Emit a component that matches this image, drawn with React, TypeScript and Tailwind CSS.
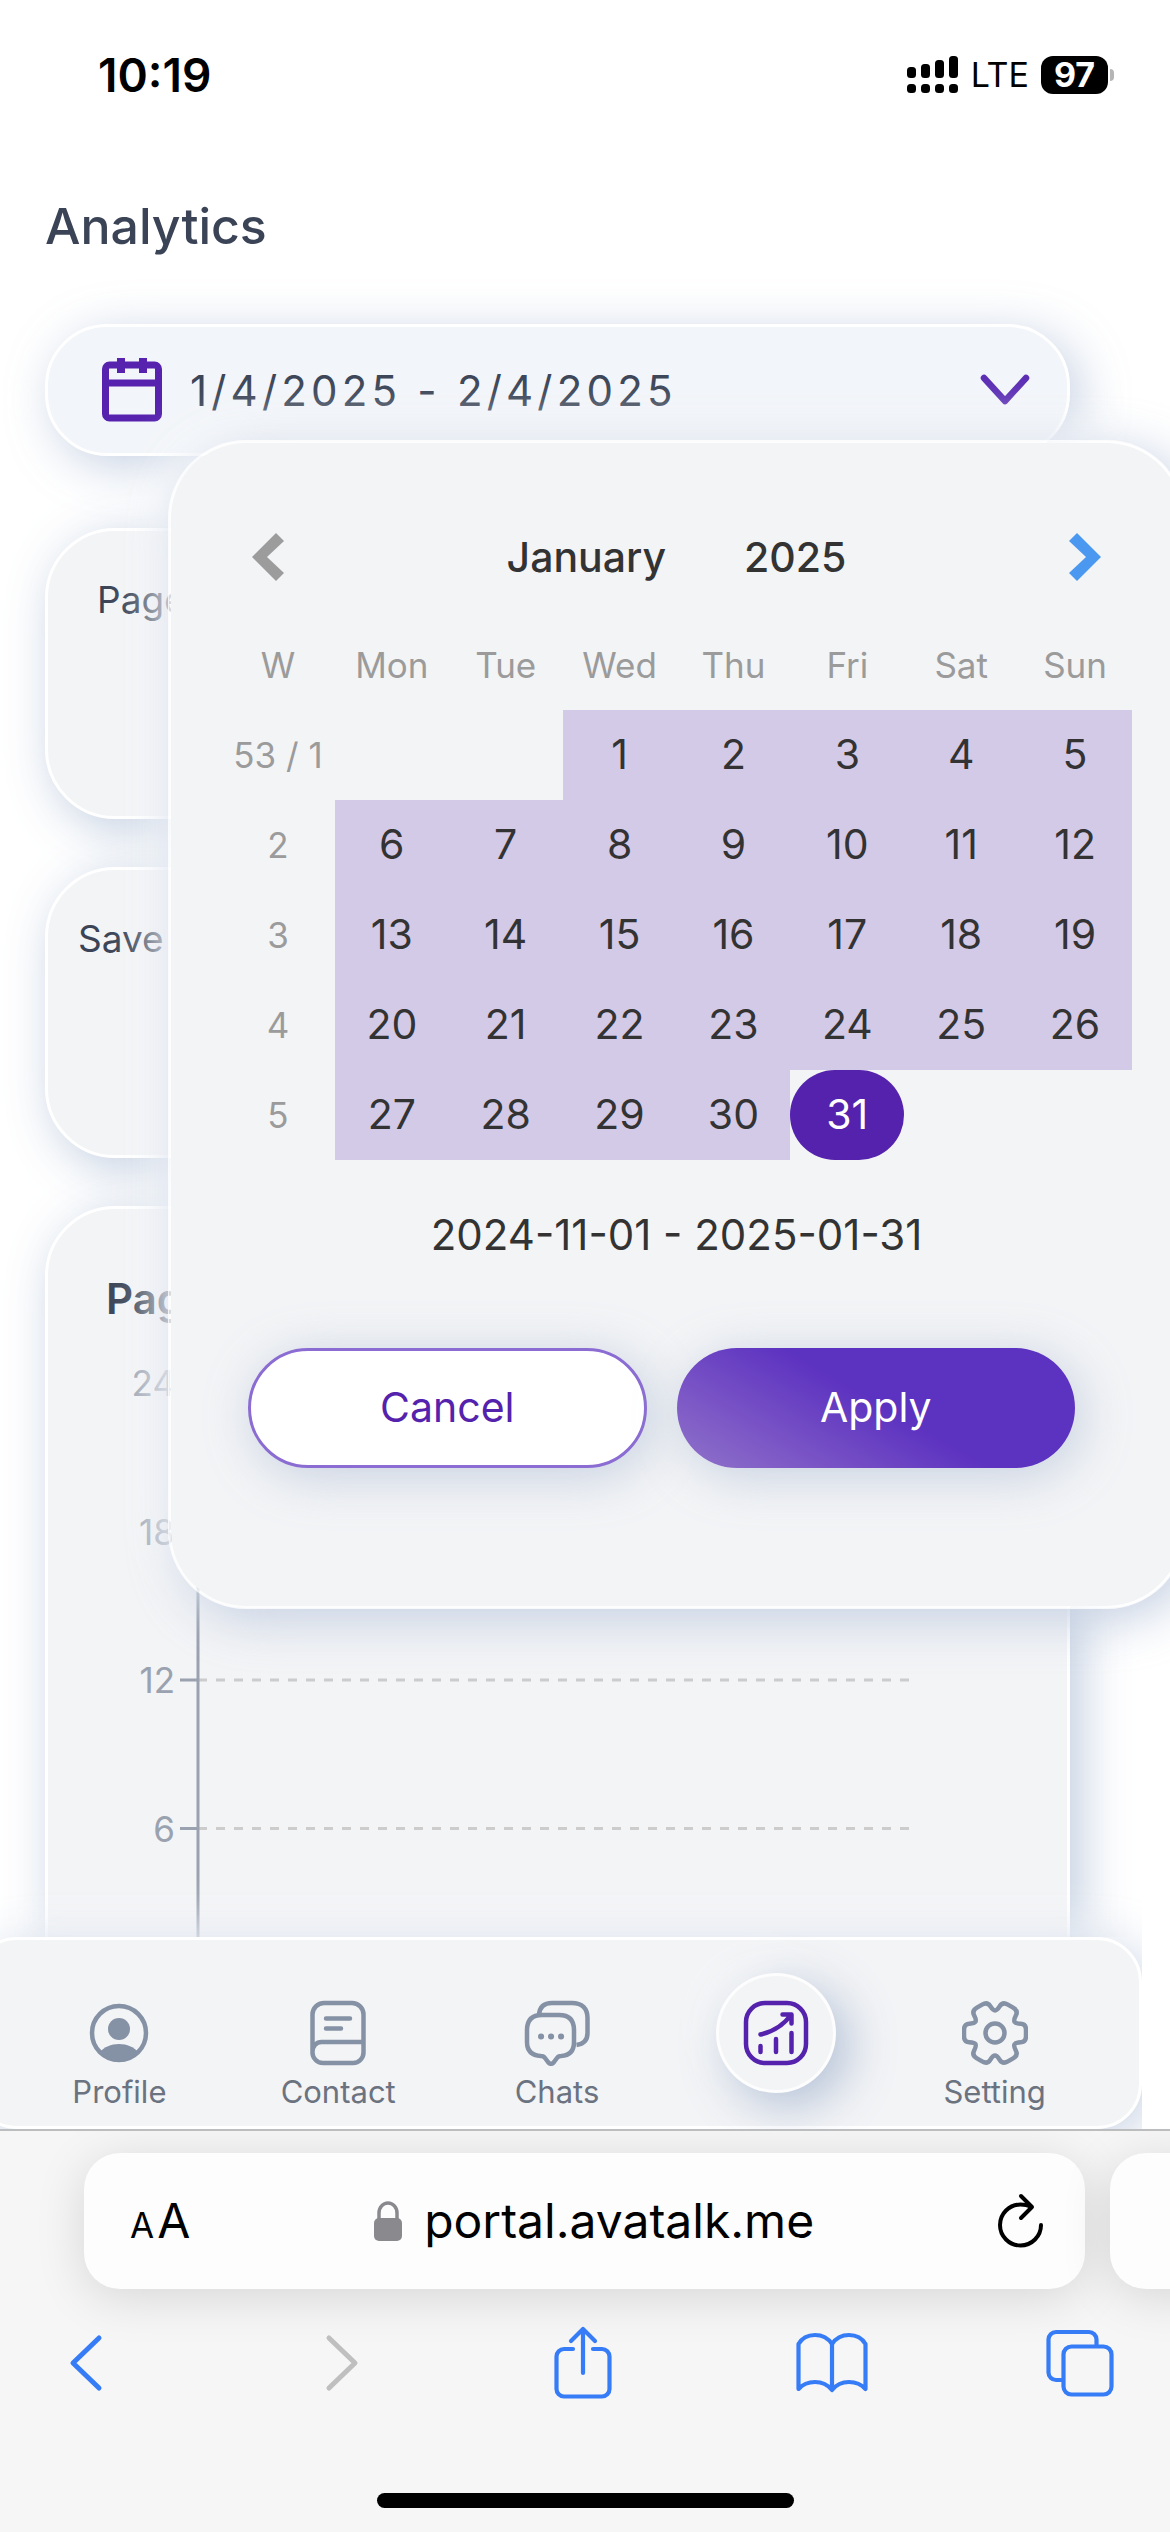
import React from "react";

const weekDays = ["Mon", "Tue", "Wed", "Thu", "Fri", "Sat", "Sun"];

const weeks: { label: string; days: (number | null)[] }[] = [
  { label: "53 / 1", days: [null, null, 1, 2, 3, 4, 5] },
  { label: "2", days: [6, 7, 8, 9, 10, 11, 12] },
  { label: "3", days: [13, 14, 15, 16, 17, 18, 19] },
  { label: "4", days: [20, 21, 22, 23, 24, 25, 26] },
  { label: "5", days: [27, 28, 29, 30, 31, null, null] },
];

const cardClass =
  "rounded-[70px] border-[3px] border-white bg-[#f3f4f6] shadow-[10px_10px_50px_rgba(184,198,220,0.9)]";

function roundedPath(points: [number, number][], radius: number) {
  const n = points.length;
  let d = "";
  points.forEach((p, i) => {
    const prev = points[(i + n - 1) % n];
    const next = points[(i + 1) % n];
    const toward = (q: [number, number]) => {
      const len = Math.hypot(q[0] - p[0], q[1] - p[1]);
      const t = Math.min(radius, len / 2) / len;
      return `${(p[0] + (q[0] - p[0]) * t).toFixed(2)} ${(p[1] + (q[1] - p[1]) * t).toFixed(2)}`;
    };
    d += `${i === 0 ? "M" : "L"}${toward(prev)} Q${p[0].toFixed(2)} ${p[1].toFixed(2)} ${toward(next)} `;
  });
  return d + "Z";
}

function gearPath() {
  const tooth: [number, number][] = [
    [31, -9],
    [31, 9],
    [20.5, 9.6],
    [18.5, 13],
  ];
  const points: [number, number][] = [];
  for (let k = 0; k < 6; k++) {
    const a = (k * Math.PI) / 3;
    tooth.forEach(([x, y]) =>
      points.push([x * Math.cos(a) - y * Math.sin(a), x * Math.sin(a) + y * Math.cos(a)])
    );
  }
  return roundedPath(points, 6);
}

function StatusBar() {
  return (
    <div className="flex h-[150px] shrink-0 items-center justify-between pl-[98px] pr-[56px] text-black">
      <span className="text-[46px] font-semibold leading-none">10:19</span>
      <div className="flex items-center gap-[12px]">
        <svg width="52" height="38" viewBox="0 0 52 38" aria-label="Signal">
          {[0, 14, 28, 42].map((x, i) => (
            <g key={x}>
              <rect x={x} y={[11, 8, 4, 0][i]} width="9" height={[11, 14, 18, 22][i]} rx="3.5" />
              <rect x={x} y="28" width="9" height="9" rx="3.5" />
            </g>
          ))}
        </svg>
        <span className="text-[34px] leading-none">LTE</span>
        <div className="flex items-center gap-[2px]">
          <span className="flex h-[38px] w-[67px] items-center justify-center rounded-[12px] bg-black text-[34px] font-bold leading-none text-white">
            97
          </span>
          <span className="h-[12px] w-[4px] rounded-r-full bg-[#b5b5b5]" />
        </div>
      </div>
    </div>
  );
}

function DateRangePicker() {
  return (
    <div className="relative z-10">
      <button
        type="button"
        className="flex h-[132px] w-full items-center rounded-[62px] border-[3px] border-white bg-[#f2f5f9] pl-[54px] pr-[37px] text-[#3c4658] shadow-[10px_10px_50px_rgba(184,198,220,0.8)]"
      >
        <svg width="60" height="64" viewBox="0 0 60 64" fill="none" stroke="#5622ae" strokeWidth="7">
          <rect x="3.5" y="7" width="53" height="53" rx="4" />
          <path d="M3 25h54" />
          <path d="M19 0v15M41 0v15" strokeWidth="8" />
        </svg>
        <span className="ml-[28px] text-[42px] tracking-widest">1/4/2025 - 2/4/2025</span>
        <svg className="ml-auto" width="50" height="32" viewBox="0 0 50 32" fill="none" stroke="#5b2db4" strokeWidth="6.5" strokeLinecap="round" strokeLinejoin="round">
          <path d="M4 4l21 23L46 4" />
        </svg>
      </button>

      <div
        role="dialog"
        aria-label="Choose a date range"
        className="absolute left-[123px] -right-[115px] top-[116px] flex flex-col rounded-[78px] border-[3px] border-white/80 bg-[#f3f4f6] bg-clip-padding px-[50px] pb-[138px] pt-[78px] shadow-[10px_10px_50px_rgba(178,192,216,0.75),-10px_-10px_50px_rgba(255,255,255,1)]"
      >
        <div className="flex h-[72px] items-center justify-between px-[31px]">
          <button type="button" aria-label="Previous month">
            <svg width="32" height="48" viewBox="0 0 32 48" fill="#9c9c9c">
              <path d="M24 0l8 8-17 16 17 16-8 8L0 24z" />
            </svg>
          </button>
          <div className="flex gap-[78px] text-[41px] font-medium leading-none text-[#333]">
            <button type="button">January</button>
            <button type="button">2025</button>
          </div>
          <button type="button" aria-label="Next month">
            <svg width="32" height="48" viewBox="0 0 32 48" fill="#4b98f0">
              <path d="M8 0L0 8l17 16L0 40l8 8 24-24z" />
            </svg>
          </button>
        </div>

        <table className="mt-[27px] w-full table-fixed border-collapse text-center">
          <thead>
            <tr className="h-[90px] text-[35px] text-[#9b9b9b]">
              <th className="font-normal" scope="col">W</th>
              {weekDays.map((d) => (
                <th key={d} className="font-normal" scope="col">{d}</th>
              ))}
            </tr>
          </thead>
          <tbody>
            {weeks.map((w) => (
              <tr key={w.label} className="h-[90px]">
                <th scope="row" className="whitespace-nowrap text-[35px] font-normal text-[#9b9b9b]">{w.label}</th>
                {w.days.map((d, i) => (
                  <td key={i} className="p-0">
                    {d !== null && (
                      <button
                        type="button"
                        className={
                          d === 31
                            ? "block h-[90px] w-full rounded-[45px] bg-[#5422ac] text-[41px] text-white"
                            : "block h-[90px] w-full bg-[#d3cae8] text-[41px] text-[#333]"
                        }
                      >
                        {d}
                      </button>
                    )}
                  </td>
                ))}
              </tr>
            ))}
          </tbody>
        </table>

        <p className="mt-[48px] text-center text-[42px] leading-[54px] text-[#333]">2024-11-01 - 2025-01-31</p>

        <div className="mt-[86px] grid grid-cols-2 gap-[30px] pl-[27px] pr-[57px] text-[41px]">
          <button
            type="button"
            className="h-[120px] rounded-[60px] border-[3px] border-[#8b6cd2] bg-white text-[#5422ac] shadow-[6px_8px_50px_rgba(188,200,219,0.8)]"
          >
            Cancel
          </button>
          <button
            type="button"
            className="h-[120px] rounded-[60px] bg-[linear-gradient(30deg,#8a6cc8_6%,#7c57c6_22%,#5c32c0_52%)] text-white shadow-[6px_8px_50px_rgba(188,200,219,0.8)]"
          >
            Apply
          </button>
        </div>
      </div>
    </div>
  );
}

function Chart() {
  return (
    <svg className="ml-[50px] mt-[20px]" width="830" height="660" viewBox="0 0 830 660" role="img" aria-label="Page chart">
      {[24, 18, 12, 6].map((v, i) => {
        const y = 34 + i * 148.5;
        return (
          <g key={v}>
            <text x="77" y={y + 13} textAnchor="end" fontSize="35" fill="#9aa1af">{v}</text>
            <path d={`M82 ${y}h18`} stroke="#9aa1af" strokeWidth="3" />
            <path d={`M100 ${y}h711`} stroke="#cccccc" strokeWidth="3" strokeDasharray="9 9" />
          </g>
        );
      })}
      <path d="M100 34v626" stroke="#9aa1af" strokeWidth="3" />
    </svg>
  );
}

const iconGray = "#8591a5";

function ProfileIcon() {
  return (
    <svg width="66" height="66" viewBox="0 0 66 66">
      <circle cx="33" cy="33" r="27" fill="none" stroke={iconGray} strokeWidth="4.5" />
      <circle cx="33" cy="29" r="11" fill={iconGray} />
      <path d="M14 52c4-5 11-8 19-8s15 3 19 8c-5 6-12 10-19 10s-14-4-19-10z" fill={iconGray} />
    </svg>
  );
}

function ContactIcon() {
  return (
    <svg width="66" height="66" viewBox="0 0 66 66" fill="none" stroke={iconGray} strokeWidth="4.5" strokeLinecap="round">
      <path d="M7.500 52V14.500a11.500 11.500 0 0 1 11.500-11.500h28a11.500 11.500 0 0 1 11.500 11.500v37.500a10.500 10.500 0 0 1-10.500 11H18a10.500 10.500 0 0 1-10.500-11c0-6 4-10 9-10h42" />
      <path d="M21 18.500h24M21 28.500h15" />
    </svg>
  );
}

function ChatsIcon() {
  return (
    <svg width="66" height="66" viewBox="0 0 66 66" fill="none" stroke={iconGray} strokeWidth="4.5" strokeLinejoin="round">
      <path d="M15 15C15.500 7 20 3 28 3h20c10 0 15.500 5.500 15.500 15v15c0 7-4 11-11 12" />
      <path d="M3 30c0-10 5-15 15-15h17c10 0 15 5 15 15v12c0 9-4 13.500-13 14-2 0-3 .5-4 2l-3 4c-2 2.500-4 2.500-6 0l-3-4c-1-1.500-2-2-4-2C8 55.500 3 51 3 42z" />
      <path d="M17 36.500h.1M27 36.500h.1M37 36.500h.1" strokeWidth="6" strokeLinecap="round" />
    </svg>
  );
}

function AnalyticsIcon() {
  return (
    <svg width="66" height="66" viewBox="0 0 66 66" fill="none" stroke="#5422ac" strokeWidth="4.5" strokeLinecap="round" strokeLinejoin="round">
      <rect x="3" y="3" width="60" height="60" rx="19" />
      <path d="M17.500 46v6M33 39v13M48.500 33v19" />
      <path d="M17.500 34.500c13-3 23-9.500 30-19M39.500 14.500h9v9" />
    </svg>
  );
}

function GearIcon() {
  return (
    <svg width="66" height="66" viewBox="-33 -33 66 66" fill="none" stroke={iconGray} strokeWidth="4.5">
      <circle r="9.500" />
      <path d={gearPath()} />
    </svg>
  );
}

function NavItem({ label, icon }: { label: string; icon: React.ReactNode }) {
  return (
    <a href="#" className="flex flex-1 flex-col items-center text-[31px] leading-[42px] text-[#6b7280]">
      {icon}
      <span className="mt-[5px]">{label}</span>
    </a>
  );
}

function AppNav() {
  return (
    <div className="relative z-20 -ml-[28px] mr-[28px] shrink-0 [clip-path:inset(-90px_0_0_0)]">
      <nav className="flex h-[192px] items-start rounded-[45px] border-[3px] border-white bg-[#f3f4f6] px-[35px] pt-[60px] shadow-[10px_10px_50px_rgba(184,198,220,0.75),-10px_-10px_50px_rgba(255,255,255,0.9)]">
        <NavItem label="Profile" icon={<ProfileIcon />} />
        <NavItem label="Contact" icon={<ContactIcon />} />
        <NavItem label="Chats" icon={<ChatsIcon />} />
        <a href="#" aria-label="Analytics" className="flex flex-1 justify-center">
          <span className="-mt-[27px] flex h-[120px] w-[120px] items-center justify-center rounded-full border-[3px] border-white/80 bg-[#f3f4f6] shadow-[12px_12px_48px_rgba(170,185,210,0.9),-10px_-10px_50px_rgba(255,255,255,0.7)]">
            <AnalyticsIcon />
          </span>
        </a>
        <NavItem label="Setting" icon={<GearIcon />} />
      </nav>
    </div>
  );
}

function BrowserBar() {
  return (
    <footer className="relative z-30 flex h-[403px] shrink-0 flex-col overflow-hidden border-t-2 border-[#bcbdbf] bg-[#f6f6f6]">
      <div className="-mr-[60px] ml-[84px] mt-[22px] flex shrink-0 gap-[25px]">
        <div className="flex h-[136px] flex-1 items-center rounded-[36px] bg-[#fdfdfd] pl-[46px] pr-[41px] text-black shadow-[0_8px_50px_rgba(0,0,0,0.13)]">
          <button type="button" aria-label="Page settings" className="flex items-baseline gap-[3px] leading-none">
            <span className="text-[35px]">A</span>
            <span className="text-[48px]">A</span>
          </button>
          <div className="flex flex-1 items-center justify-center gap-[22px]">
            <svg width="28" height="40" viewBox="0 0 28 40" fill="none">
              <rect y="17" width="28" height="23" rx="5" fill="#8a8a8e" />
              <path d="M5 19v-7a9 10 0 0 1 18 0v7" stroke="#8a8a8e" strokeWidth="3.500" />
            </svg>
            <span className="text-[48px] leading-none">portal.avatalk.me</span>
          </div>
          <button type="button" aria-label="Reload">
            <svg width="46" height="56" viewBox="0 0 46 56" fill="none" stroke="#000" strokeWidth="4" strokeLinecap="round" strokeLinejoin="round">
              <path d="M43 32a20.500 20.500 0 1 1-20.500-20.500c4 0 7 .5 10 2" />
              <path d="M23 3l11 11-11 11" />
            </svg>
          </button>
        </div>
        <div className="h-[136px] w-[120px] rounded-[36px] bg-[#fdfdfd] shadow-[0_8px_50px_rgba(0,0,0,0.13)]" />
      </div>

      <div className="mt-[34px] flex h-[80px] shrink-0 items-center justify-between pl-[50px] pr-[54px]">
        <button type="button" aria-label="Back" className="flex w-[72px] justify-center">
          <svg width="34" height="58" viewBox="0 0 34 58" fill="none" stroke="#367cf6" strokeWidth="5" strokeLinecap="round" strokeLinejoin="round">
            <path d="M30 4L4 29l26 25" />
          </svg>
        </button>
        <button type="button" aria-label="Forward" disabled className="flex w-[72px] justify-end pr-[12px]">
          <svg width="34" height="58" viewBox="0 0 34 58" fill="none" stroke="#bfbfc0" strokeWidth="5" strokeLinecap="round" strokeLinejoin="round">
            <path d="M4 4l26 25L4 54" />
          </svg>
        </button>
        <button type="button" aria-label="Share" className="flex w-[72px] justify-center">
          <svg width="58" height="74" viewBox="0 0 58 74" fill="none" stroke="#367cf6" strokeWidth="4.200" strokeLinecap="round" strokeLinejoin="round">
            <path d="M19 23H10a7.500 7.500 0 0 0-7.500 7.500V63A7.500 7.500 0 0 0 10 70.500h38a7.500 7.500 0 0 0 7.500-7.500V30.500A7.500 7.500 0 0 0 48 23h-9" />
            <path d="M29 47V3M17 15L29 3l12 12" />
          </svg>
        </button>
        <button type="button" aria-label="Bookmarks" className="flex w-[72px] justify-center">
          <svg width="72" height="62" viewBox="0 0 72 62" fill="none" stroke="#367cf6" strokeWidth="4.200" strokeLinecap="round" strokeLinejoin="round">
            <path d="M36 58V12C32 6 26 3 19 3S6 6 2.500 12v45C7 52 12 50 19 50s13 3 17 8c4-5 10-8 17-8s12 2 16.500 7V12C66 6 60 3 53 3S40 6 36 12" />
          </svg>
        </button>
        <button type="button" aria-label="Tabs" className="flex w-[72px] justify-center">
          <svg width="68" height="68" viewBox="0 0 68 68" fill="none" stroke="#367cf6" strokeWidth="4.200" strokeLinejoin="round">
            <rect x="17.500" y="17.500" width="48" height="48" rx="8" />
            <path d="M16 51h-6a7.500 7.500 0 0 1-7.500-7.500v-33A7.500 7.500 0 0 1 10 3h33a7.500 7.500 0 0 1 7.500 7.500V16" />
          </svg>
        </button>
      </div>

      <div className="mx-auto mb-[24px] mt-auto h-[15px] w-[417px] shrink-0 rounded-full bg-black" />
    </footer>
  );
}

export default function App() {
  return (
    <div className="flex h-screen min-h-0 flex-col overflow-hidden bg-white font-['Inter','Liberation_Sans',sans-serif]">
      <StatusBar />
      <main className="min-h-0 flex-1 overflow-hidden pl-[45px] pr-[100px] text-[#3a4456]">
        <h1 className="mt-[40px] text-[50px] font-medium leading-[72px]">Analytics</h1>
        <div className="mt-[62px]">
          <DateRangePicker />
        </div>
        <section className={`${cardClass} mt-[72px] h-[291px] pl-[49px] pt-[42px]`}>
          <h2 className="text-[37px] leading-[54px]">Page</h2>
        </section>
        <section className={`${cardClass} mt-[48px] h-[291px] pl-[30px] pt-[42px]`}>
          <h2 className="text-[37px] leading-[54px]">Save</h2>
        </section>
        <section className={`${cardClass} mt-[48px] h-[960px] pt-[60px]`}>
          <h2 className="pl-[58px] text-[42px] font-semibold leading-[60px]">Page</h2>
          <Chart />
        </section>
      </main>
      <AppNav />
      <BrowserBar />
    </div>
  );
}
